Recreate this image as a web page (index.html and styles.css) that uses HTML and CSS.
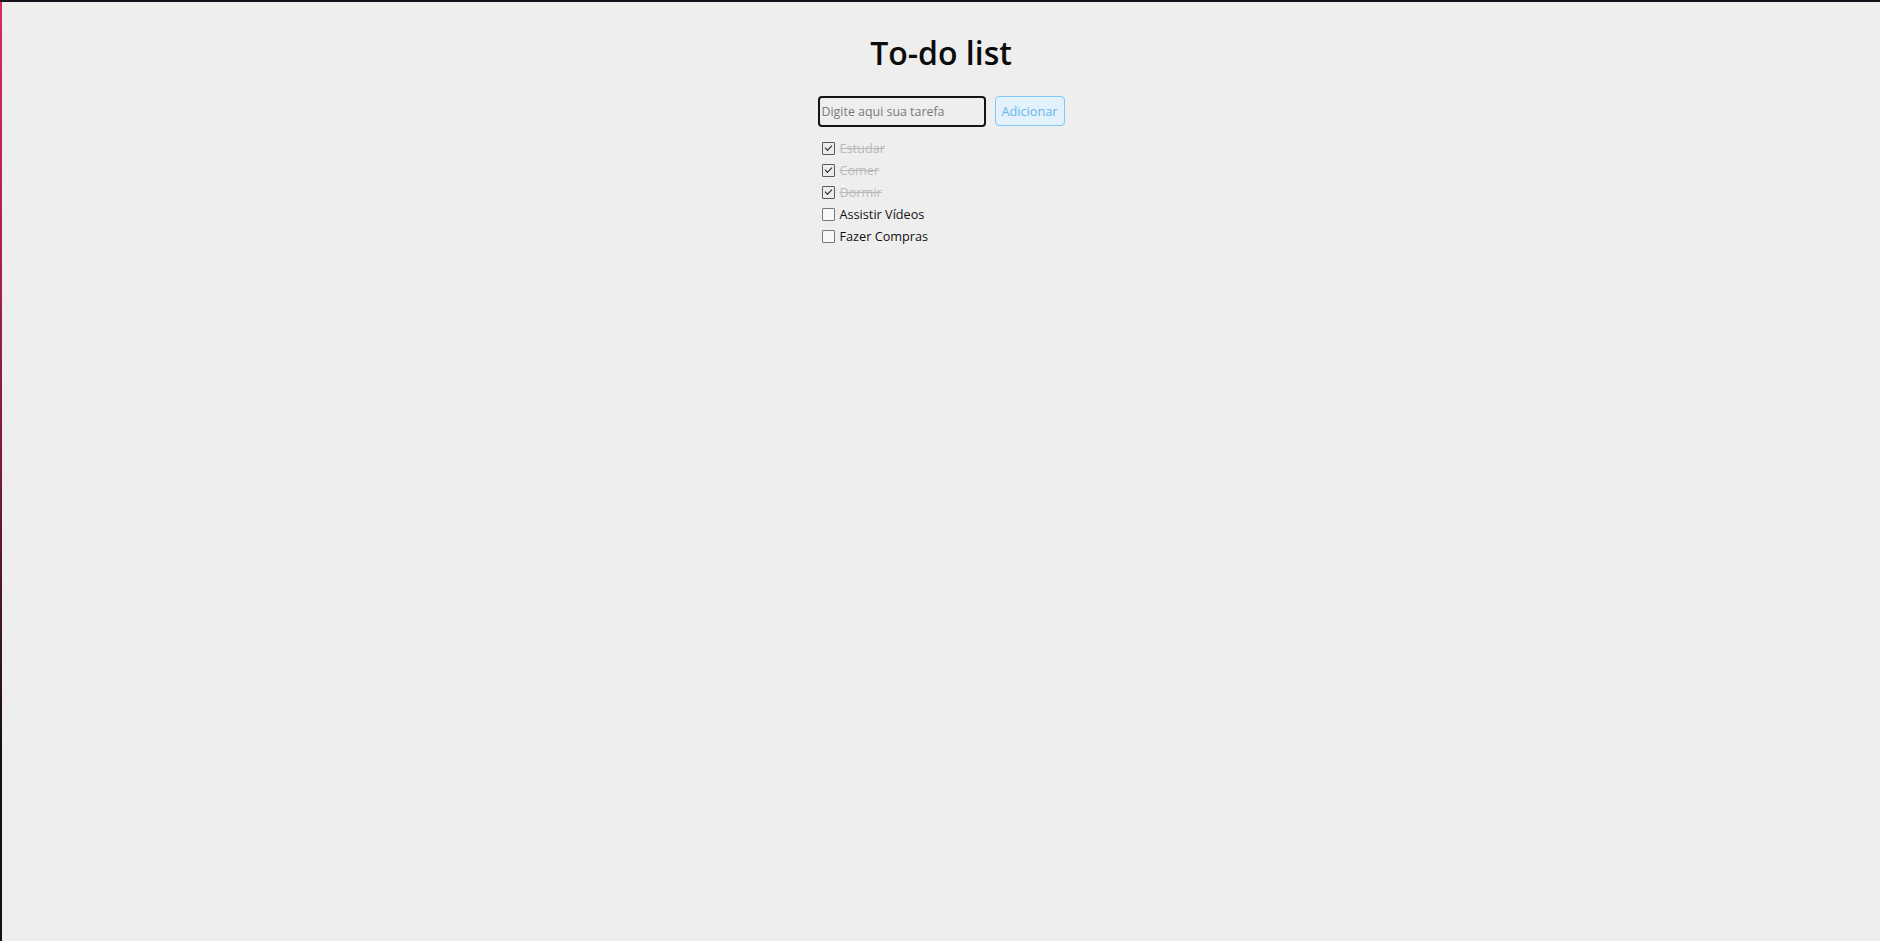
FILE: index.html
```html
<!DOCTYPE html>
<html lang="pt-BR">
<head>
<meta charset="utf-8">
<title>To-do list</title>
<link rel="stylesheet" href="styles.css">
</head>
<body>
<main class="app">
  <h1 class="title">To-do list</h1>
  <form class="add-form">
    <input class="task-input" type="text" placeholder="Digite aqui sua tarefa">
    <button class="add-btn" type="button">Adicionar</button>
  </form>
  <ul class="tasks">
    <li class="task done"><input class="check" type="checkbox" checked><span class="label">Estudar</span></li>
    <li class="task done"><input class="check" type="checkbox" checked><span class="label">Comer</span></li>
    <li class="task done"><input class="check" type="checkbox" checked><span class="label">Dormir</span></li>
    <li class="task"><input class="check" type="checkbox"><span class="label">Assistir Vídeos</span></li>
    <li class="task"><input class="check" type="checkbox"><span class="label">Fazer Compras</span></li>
  </ul>
</main>
</body>
</html>
```

FILE: styles.css
```css
html, body {
  height: 100%;
}
body {
  margin: 0;
  box-sizing: border-box;
  border-top: 2px solid #14121a;
  padding-left: 2px;
  background: linear-gradient(to bottom, #dc2a5c 0%, #7a1a38 50%, #121015 80%, #121015 100%) left top / 2px 100% no-repeat, #eeeeee;
  font-family: "Open Sans", "Noto Sans", sans-serif;
  color: #111;
}
.app {
  display: flex;
  flex-direction: column;
  align-items: center;
  padding-top: 29px;
}
.title {
  margin: 0;
  font-size: 32px;
  line-height: 44px;
  font-weight: 600;
  color: #0c0c0c;
}
.add-form {
  display: flex;
  gap: 9px;
  margin-top: 21px;
}
.task-input {
  box-sizing: border-box;
  width: 168px;
  height: 31px;
  border: 2px solid #141414;
  border-radius: 4px;
  background: #eeeeee;
  padding: 0 2px;
  font-family: inherit;
  font-size: 12.4px;
  color: #222;
  outline: none;
}
.task-input::placeholder {
  color: #7a7a7a;
}
.add-btn {
  box-sizing: border-box;
  width: 70px;
  height: 30px;
  border: 1px solid #7fc8f8;
  border-radius: 4px;
  background: #e2f1fb;
  color: #62b6f0;
  font-family: inherit;
  font-size: 12.7px;
  padding: 0;
}
.tasks {
  list-style: none;
  margin: 10px 0 0;
  padding: 0;
  width: 247px;
}
.task {
  display: flex;
  align-items: center;
  height: 22px;
  font-size: 12.7px;
}
.check {
  appearance: none;
  -webkit-appearance: none;
  box-sizing: border-box;
  width: 13px;
  height: 13px;
  margin: 0 5px 0 4px;
  border: 1px solid #777;
  border-radius: 1px;
  background: #f8f8f8;
  position: relative;
}
.check:checked {
  border-color: #5a5a5a;
  background: #ececec;
}
.check:checked::after {
  content: "";
  position: absolute;
  left: 2px;
  top: 2px;
  width: 6px;
  height: 3px;
  border-left: 1.5px solid #222;
  border-bottom: 1.5px solid #222;
  transform: rotate(-45deg);
}
.done .label {
  color: #b9b9b9;
  text-decoration: line-through;
}
```
